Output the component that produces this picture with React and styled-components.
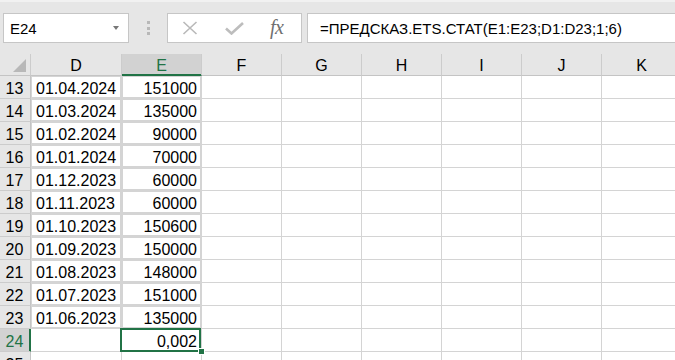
import React from "react";
import styled, { createGlobalStyle, css } from "styled-components";

const GlobalStyle = createGlobalStyle`
  html, body { margin: 0; padding: 0; background: #ffffff; }
  body { font-family: "Liberation Sans", Arial, sans-serif; overflow: hidden; }
  * { box-sizing: border-box; }
`;

const GREEN = "#217346";
const GRID = "#d4d4d4";

const Page = styled.div`
  width: 675px;
  height: 360px;
  overflow: hidden;
  background: #ffffff;
`;

const Toolbar = styled.div`
  height: 54px;
  background: #e6e6e6;
  display: flex;
  align-items: flex-start;
  padding: 11px 0 0 3px;
  border-top: 2px solid #f1f1f1;
`;

const Field = styled.div`
  height: 30px;
  background: #ffffff;
  border: 1px solid #c6c6c6;
  display: flex;
  align-items: center;
  font-size: 15px;
  color: #000;
`;

const NameBox = styled(Field)`
  width: 126px;
  padding: 0 8px 0 6px;
  justify-content: space-between;
`;

const Caret = styled.span`
  width: 0;
  height: 0;
  border-left: 3.5px solid transparent;
  border-right: 3.5px solid transparent;
  border-top: 4px solid #777777;
  margin-right: 1px;
`;

const Grip = styled.div`
  width: 38px;
  height: 30px;
  display: flex;
  flex-direction: column;
  align-items: center;
  justify-content: center;
  gap: 2.5px;
`;

const Dot = styled.span`
  width: 3px;
  height: 3px;
  background: #b8b8b8;
`;

const FxButtons = styled(Field)`
  width: 135px;
  padding: 0 0 0 14px;
`;

const IconSlot = styled.span`
  width: ${(p) => p.$w}px;
  display: flex;
  align-items: center;
`;

const FxText = styled.span`
  font-family: "Liberation Serif", "Times New Roman", serif;
  font-style: italic;
  font-size: 20px;
  color: #707070;
  letter-spacing: -0.5px;
  margin-top: -2px;
`;

const FormulaInput = styled(Field)`
  flex: 1;
  margin-left: 5px;
  margin-right: -12px;
  padding-left: 12px;
  white-space: nowrap;
`;

const Sheet = styled.div`
  display: grid;
  grid-template-columns: 31px 91px repeat(7, 80px);
  grid-template-rows: 22px;
  grid-auto-rows: 23px;
  font-size: 16px;
  color: #000;
`;

const HeaderCell = styled.div`
  background: ${(p) => (p.$active ? "#d2d2d2" : "#e6e6e6")};
  color: ${(p) => (p.$active ? GREEN : "#000")};
  border-right: 1px solid #cccccc;
  border-bottom: 1px solid ${(p) => (p.$active ? GREEN : "#c4c4c4")};
  box-shadow: ${(p) => (p.$active ? `inset 0 -1px 0 ${GREEN}` : "none")};
  display: flex;
  align-items: flex-end;
  justify-content: center;
  line-height: 18px;
`;

const Corner = styled(HeaderCell)`
  justify-content: flex-end;
  align-items: flex-end;
  padding: 0 4px 3px 0;
`;

const RowHeader = styled.div`
  background: ${(p) => (p.$active ? "#d2d2d2" : "#e6e6e6")};
  color: ${(p) => (p.$active ? GREEN : "#000")};
  border-right: 1px solid ${(p) => (p.$active ? GREEN : "#c4c4c4")};
  border-bottom: 1px solid #cccccc;
  box-shadow: ${(p) => (p.$active ? `inset -1px 0 0 ${GREEN}` : "none")};
  display: flex;
  align-items: flex-end;
  justify-content: center;
  line-height: 18px;
  padding-right: 1px;
`;

const Cell = styled.div`
  position: relative;
  border-right: 1px solid ${GRID};
  border-bottom: 1px solid ${GRID};
  display: flex;
  align-items: flex-end;
  justify-content: ${(p) => (p.$num ? "flex-end" : "flex-start")};
  padding: 0 4px 0 5px;
  line-height: 18px;
  white-space: nowrap;
  ${(p) =>
    p.$boxed &&
    css`
      box-shadow: inset 0 0 0 1px ${GRID};
    `}
  ${(p) =>
    p.$selected &&
    css`
      z-index: 2;
      &::after {
        content: "";
        position: absolute;
        left: -2px;
        top: -1px;
        right: 0;
        bottom: -1px;
        border: 2px solid ${GREEN};
        pointer-events: none;
      }
    `}
`;

const FillHandle = styled.span`
  position: absolute;
  right: -4px;
  bottom: -4px;
  width: 7px;
  height: 7px;
  background: ${GREEN};
  border: 1px solid #ffffff;
  z-index: 3;
`;

const COLS = ["D", "E", "F", "G", "H", "I", "J", "K"];

const DATA = [
  [13, "01.04.2024", "151000"],
  [14, "01.03.2024", "135000"],
  [15, "01.02.2024", "90000"],
  [16, "01.01.2024", "70000"],
  [17, "01.12.2023", "60000"],
  [18, "01.11.2023", "60000"],
  [19, "01.10.2023", "150600"],
  [20, "01.09.2023", "150000"],
  [21, "01.08.2023", "148000"],
  [22, "01.07.2023", "151000"],
  [23, "01.06.2023", "135000"],
  [24, "", "0,002"],
  [25, "", ""],
];

function CloseIcon() {
  return (
    <svg width="16" height="14" viewBox="0 0 16 14">
      <path d="M1.5 1 L14.5 13 M14.5 1 L1.5 13" stroke="#b9b9b9" strokeWidth="1.6" fill="none" />
    </svg>
  );
}

function CheckIcon() {
  return (
    <svg width="19" height="13" viewBox="0 0 19 13">
      <path d="M1 6.5 L6.5 11.5 L18 1" stroke="#bdbdbd" strokeWidth="2.6" fill="none" />
    </svg>
  );
}

function CornerTriangle() {
  return (
    <svg width="13" height="13" viewBox="0 0 13 13">
      <polygon points="13,0 13,13 0,13" fill="#b8b8b8" />
    </svg>
  );
}

export default function App() {
  return (
    <Page>
      <GlobalStyle />
      <Toolbar>
        <NameBox>
          <span>E24</span>
          <Caret />
        </NameBox>
        <Grip>
          <Dot />
          <Dot />
          <Dot />
        </Grip>
        <FxButtons>
          <IconSlot $w={43}>
            <CloseIcon />
          </IconSlot>
          <IconSlot $w={45}>
            <CheckIcon />
          </IconSlot>
          <IconSlot $w={30}>
            <FxText>fx</FxText>
          </IconSlot>
        </FxButtons>
        <FormulaInput>=ПРЕДСКАЗ.ETS.СТАТ(E1:E23;D1:D23;1;6)</FormulaInput>
      </Toolbar>
      <Sheet>
        <Corner>
          <CornerTriangle />
        </Corner>
        {COLS.map((c) => (
          <HeaderCell key={c} $active={c === "E"}>
            {c}
          </HeaderCell>
        ))}
        {DATA.map(([n, d, v]) => {
          const boxed = n <= 23;
          const selected = n === 24;
          return (
            <React.Fragment key={n}>
              <RowHeader $active={selected}>{n}</RowHeader>
              <Cell $boxed={boxed}>{d}</Cell>
              <Cell $boxed={boxed} $num $selected={selected}>
                {v}
                {selected && <FillHandle />}
              </Cell>
              {COLS.slice(2).map((c) => (
                <Cell key={c} />
              ))}
            </React.Fragment>
          );
        })}
      </Sheet>
    </Page>
  );
}
